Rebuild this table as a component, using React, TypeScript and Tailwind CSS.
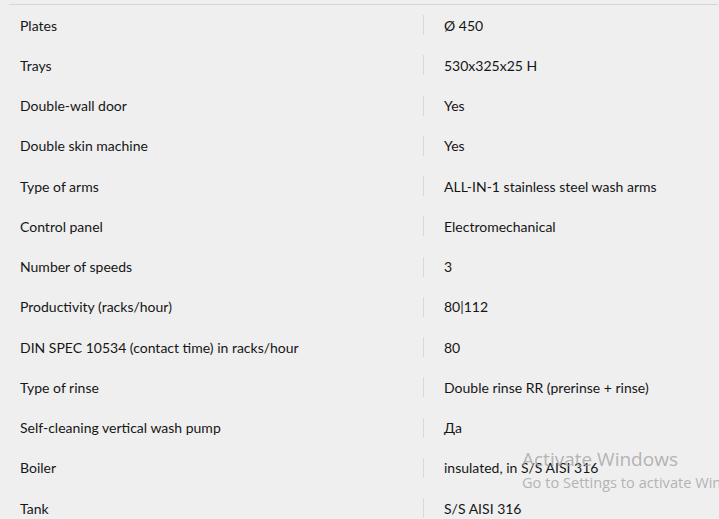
import React from "react";

const rows: [string, string][] = [
  ["Plates", "Ø 450"],
  ["Trays", "530x325x25 H"],
  ["Double-wall door", "Yes"],
  ["Double skin machine", "Yes"],
  ["Type of arms", "ALL-IN-1 stainless steel wash arms"],
  ["Control panel", "Electromechanical"],
  ["Number of speeds", "3"],
  ["Productivity (racks/hour)", "80|112"],
  ["DIN SPEC 10534 (contact time) in racks/hour", "80"],
  ["Type of rinse", "Double rinse RR (prerinse + rinse)"],
  ["Self-cleaning vertical wash pump", "Да"],
  ["Boiler", "insulated, in S/S AISI 316"],
  ["Tank", "S/S AISI 316"],
];

export default function App() {
  return (
    <div
      className="relative w-[719px] h-[519px] overflow-hidden bg-[#efefef] text-[#161616] text-[14px]"
      style={{ fontFamily: "Lato, 'Noto Sans', sans-serif" }}
    >
      <div className="pt-[4px] pl-[9px] pr-[1px]">
        <div className="border-t border-[#d6d6d6]">
          {rows.map(([k, v]) => (
            <div key={k} className="flex items-center h-[40.25px]">
              <div className="w-[414px] pl-[11px] shrink-0">{k}</div>
              <div className="w-px h-[20px] bg-[#d9d9d9] shrink-0" />
              <div className="pl-[20px]">{v}</div>
            </div>
          ))}
        </div>
      </div>
      <div
        className="absolute left-[522px] top-[450px] w-[260px] text-[#a3a3a3]/80 leading-none pointer-events-none"
        style={{ fontFamily: "'Open Sans', 'Noto Sans', sans-serif" }}
      >
        <div className="text-[19px]">Activate Windows</div>
        <div className="text-[14.6px] mt-[6px] whitespace-nowrap">Go to Settings to activate Windows.</div>
      </div>
    </div>
  );
}
